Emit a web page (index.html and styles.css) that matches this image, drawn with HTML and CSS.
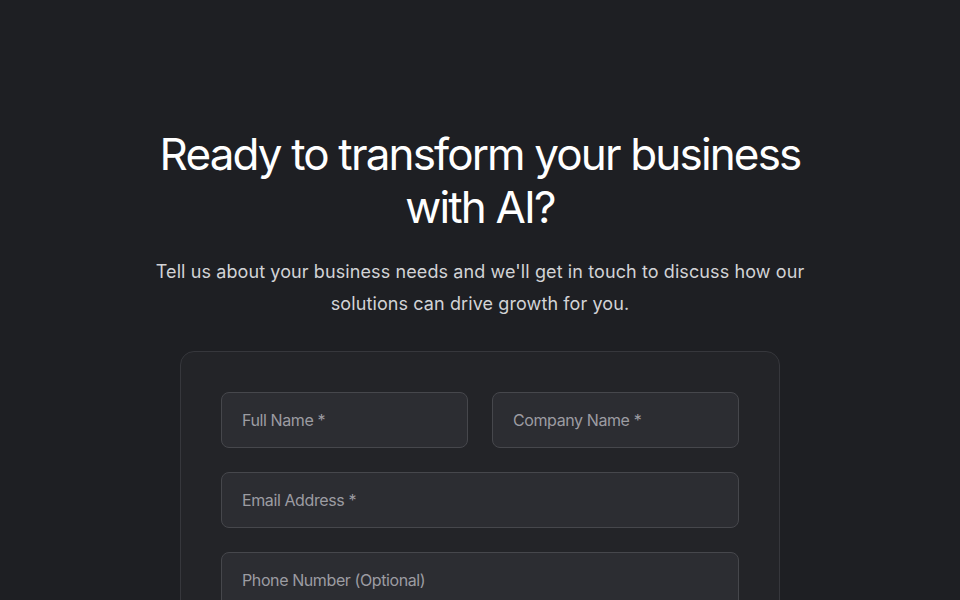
FILE: index.html
```html
<!DOCTYPE html>
<html>
<head>
<meta charset="utf-8" />
<title>Contact</title>
<link rel="stylesheet" href="styles.css">
</head>
<body>
	<section class="contact">
		<h1 class="contact-title">Ready to transform your business with AI?</h1>
		<p class="contact-lead">Tell us about your business needs and we'll get in touch to discuss how our solutions can drive growth for you.</p>

		<form class="contact-card">
			<div class="row row-split">
				<input class="field" type="text" placeholder="Full Name *">
				<input class="field" type="text" placeholder="Company Name *">
			</div>
			<div class="row">
				<input class="field" type="email" placeholder="Email Address *">
			</div>
			<div class="row">
				<input class="field" type="tel" placeholder="Phone Number (Optional)">
			</div>
			<div class="row">
				<textarea class="field field-area" placeholder="Tell us about your business needs *"></textarea>
			</div>
		</form>
	</section>
</body>
</html>
```

FILE: styles.css
```css
html, body {
	margin: 0;
	background: #1e1f23;
	color: #fff;
	font-family: Inter, "Liberation Sans", sans-serif;
}

.contact {
	padding: 128px 20px 80px;
	display: flex;
	flex-direction: column;
	align-items: center;
}

.contact-title {
	margin: 0;
	max-width: 720px;
	font-size: 44px;
	font-weight: 400;
	line-height: 53px;
	letter-spacing: -1.85px;
	text-align: center;
}

.contact-lead {
	margin: 22px 0 0;
	max-width: 680px;
	font-size: 18px;
	line-height: 32px;
	letter-spacing: 0.1px;
	color: #d2d3d6;
	text-align: center;
}

.contact-card {
	margin-top: 31px;
	width: 600px;
	box-sizing: border-box;
	padding: 40px;
	background: #232428;
	border: 1px solid #36373c;
	border-radius: 14px;
	display: flex;
	flex-direction: column;
	gap: 24px;
}

.row {
	display: flex;
}
.row-split {
	gap: 24px;
}

.field {
	flex: 1;
	min-width: 0;
	height: 56px;
	box-sizing: border-box;
	padding: 0 20px;
	background: #2c2d32;
	border: 1px solid #46474c;
	border-radius: 8px;
	color: #fff;
	font-family: inherit;
	font-size: 16px;
	letter-spacing: -0.4px;
	outline: none;
}
.field::placeholder {
	color: #9c9ca2;
}
.field-area {
	height: 140px;
	padding-top: 16px;
	resize: none;
}
```
